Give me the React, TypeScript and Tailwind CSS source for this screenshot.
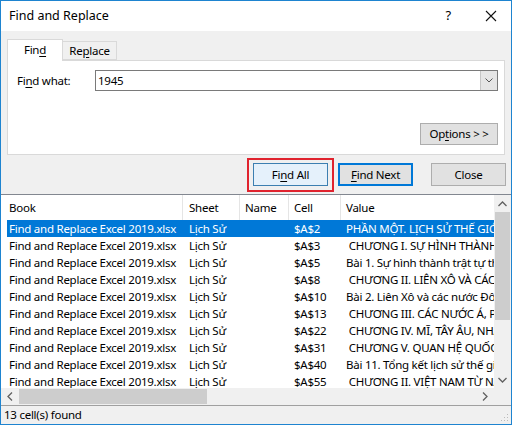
import React from "react";

const rows = [
  { cell: "$A$2", value: "PHẦN MỘT. LỊCH SỬ THẾ GIỚI HIỆN ĐẠI" },
  { cell: "$A$3", value: " CHƯƠNG I. SỰ HÌNH THÀNH TRẬT TỰ THẾ GIỚI" },
  { cell: "$A$5", value: "Bài 1. Sự hình thành trật tự thế giới mới" },
  { cell: "$A$8", value: " CHƯƠNG II. LIÊN XÔ VÀ CÁC NƯỚC ĐÔNG ÂU" },
  { cell: "$A$10", value: "Bài 2. Liên Xô và các nước Đông Âu" },
  { cell: "$A$13", value: " CHƯƠNG III. CÁC NƯỚC Á, PHI, MĨ LA TINH" },
  { cell: "$A$22", value: " CHƯƠNG IV. MĨ, TÂY ÂU, NHẬT BẢN" },
  { cell: "$A$31", value: " CHƯƠNG V. QUAN HỆ QUỐC TẾ" },
  { cell: "$A$40", value: "Bài 11. Tổng kết lịch sử thế giới" },
  { cell: "$A$55", value: " CHƯƠNG II. VIỆT NAM TỪ NĂM 1945" },
];

const font = { fontFamily: '"Noto Sans", "Open Sans", sans-serif' };

function U({ children }: { children: React.ReactNode }) {
  return <span className="underline underline-offset-2">{children}</span>;
}

export default function App() {
  return (
    <div
      className="w-[512px] h-[425px] border border-[#1e84d0] bg-[#f0f0f0] flex flex-col text-[11.5px] tracking-[-0.25px] text-black overflow-hidden"
      style={font}
    >
      {/* Title bar */}
      <div className="h-[30px] bg-white flex items-center shrink-0">
        <span className="pl-[8px] text-[12.5px] tracking-normal">Find and Replace</span>
        <span className="ml-auto mr-[34px] text-[13px]">?</span>
        <svg width="12" height="12" viewBox="0 0 12 12" className="mr-[14px]">
          <path d="M1 1L11 11M11 1L1 11" stroke="#111" strokeWidth="1.1" />
        </svg>
      </div>

      {/* Tabs */}
      <div className="flex items-end pl-[6px] pt-[7px] h-[29px] shrink-0">
        <div className="w-[56px] h-[22px] pb-[2px] bg-white border border-b-0 border-[#d9d9d9] flex items-center justify-center relative z-10 -mb-px">
          <span>
            Fin<U>d</U>
          </span>
        </div>
        <div className="w-[54px] h-[19px] border border-l-0 border-[#d9d9d9] flex items-center justify-center">
          <span>
            Re<U>p</U>lace
          </span>
        </div>
      </div>

      {/* Tab panel */}
      <div className="mx-[6px] h-[95px] bg-white border border-[#d9d9d9] flex flex-col shrink-0 pr-[6px]">
        <div className="flex items-center mt-[9px]">
          <span className="w-[87px] pl-[9px]">
            Fi<U>n</U>d what:
          </span>
          <div className="flex-1 h-[21px] border border-[#7a7a7a] flex items-center">
            <span className="pl-[2px] flex-1">1945</span>
            <div className="w-[17px] h-[19px] bg-[#e5e5e5] border-l border-[#c5c5c5] flex items-center justify-center">
              <svg width="8" height="5" viewBox="0 0 8 5">
                <path d="M0.5 0.5L4 4L7.5 0.5" stroke="#555" fill="none" />
              </svg>
            </div>
          </div>
        </div>
        <div className="flex justify-end mt-[32px]">
          <div className="w-[78px] h-[22px] bg-[#e1e1e1] border border-[#adadad] flex items-center justify-center">
            <span>
              Op<U>t</U>ions &gt; &gt;
            </span>
          </div>
        </div>
      </div>

      {/* Buttons */}
      <div className="flex items-center h-[39px] shrink-0 pl-[246px]">
        <div className="w-[87px] h-[34px] border-2 border-[#e0232e] flex items-center justify-center">
          <div className="w-[75px] h-[23px] bg-[#e5f1fb] border border-[#3c7fb1] flex items-center justify-center">
            <span>
              Fi<U>n</U>d All
            </span>
          </div>
        </div>
        <div className="ml-[4px] w-[75px] h-[23px] bg-[#e1e1e1] border-2 border-[#0078d7] flex items-center justify-center">
          <span>
            <U>F</U>ind Next
          </span>
        </div>
        <div className="ml-[18px] w-[75px] h-[23px] bg-[#e1e1e1] border border-[#adadad] flex items-center justify-center">
          <span>Close</span>
        </div>
      </div>

      {/* Results list */}
      <div className="h-[211px] bg-white border-t border-[#828790] flex shrink-0 flex-col">
        <div className="flex flex-1 min-h-0">
          <div className="flex-1 min-w-0 flex flex-col overflow-hidden">
            <div className="h-[25px] grid grid-cols-[182px_57px_49px_52px_1fr] shrink-0">
              <div className="pl-[8px] flex items-center border-r border-[#e5e5e5]">Book</div>
              <div className="pl-[6px] flex items-center border-r border-[#e5e5e5]">Sheet</div>
              <div className="pl-[5px] flex items-center border-r border-[#e5e5e5]">Name</div>
              <div className="pl-[5px] flex items-center border-r border-[#e5e5e5]">Cell</div>
              <div className="pl-[5px] flex items-center">Value</div>
            </div>
            {rows.map((r, i) => (
              <div
                key={r.cell}
                className={
                  i === 0
                    ? "h-[17px] grid grid-cols-[176px_57px_49px_52px_1fr] ml-[6px] bg-[#0078d7] text-white shrink-0"
                    : "h-[17px] grid grid-cols-[176px_57px_49px_52px_1fr] ml-[6px] shrink-0"
                }
              >
                <div className="pl-[2px] flex items-center whitespace-nowrap">
                  Find and Replace Excel 2019.xlsx
                </div>
                <div className="pl-[6px] flex items-center whitespace-nowrap">Lịch Sử</div>
                <div />
                <div className="pl-[5px] flex items-center">{r.cell}</div>
                <div className="pl-[5px] flex items-center whitespace-pre overflow-hidden">{r.value}</div>
              </div>
            ))}
          </div>
          {/* Vertical scrollbar */}
          <div className="w-[17px] bg-[#f0f0f0] flex flex-col items-center shrink-0">
            <div className="h-[17px] flex items-center justify-center">
              <svg width="9" height="6" viewBox="0 0 9 6">
                <path d="M0.5 5L4.5 1L8.5 5" stroke="#606060" strokeWidth="1.3" fill="none" />
              </svg>
            </div>
            <div className="w-[15px] h-[108px] bg-[#cdcdcd]" />
            <div className="flex-1" />
            <div className="h-[17px] flex items-center justify-center">
              <svg width="9" height="6" viewBox="0 0 9 6">
                <path d="M0.5 1L4.5 5L8.5 1" stroke="#606060" strokeWidth="1.3" fill="none" />
              </svg>
            </div>
          </div>
        </div>
        {/* Horizontal scrollbar */}
        <div className="h-[17px] flex shrink-0">
          <div className="flex-1 bg-[#f0f0f0] flex items-center">
            <div className="w-[18px] flex items-center justify-center">
              <svg width="6" height="9" viewBox="0 0 6 9">
                <path d="M5 0.5L1 4.5L5 8.5" stroke="#606060" strokeWidth="1.3" fill="none" />
              </svg>
            </div>
            <div className="w-[188px] h-[15px] bg-[#cdcdcd]" />
            <div className="flex-1" />
            <div className="w-[18px] flex items-center justify-center">
              <svg width="6" height="9" viewBox="0 0 6 9">
                <path d="M1 0.5L5 4.5L1 8.5" stroke="#606060" strokeWidth="1.3" fill="none" />
              </svg>
            </div>
          </div>
          <div className="w-[17px] bg-[#f0f0f0]" />
        </div>
      </div>

      {/* Status bar */}
      <div className="flex-1 border-t border-[#a0a0a0] bg-[#f0f0f0] flex items-center relative">
        <span className="pl-[3px]">13 cell(s) found</span>
        <svg width="10" height="10" viewBox="0 0 10 10" className="absolute right-[2px] bottom-[2px]">
          <rect x="8" y="2" width="1" height="1" fill="#bbb" />
          <rect x="5" y="5" width="1" height="1" fill="#bbb" />
          <rect x="8" y="5" width="1" height="1" fill="#bbb" />
          <rect x="2" y="8" width="1" height="1" fill="#bbb" />
          <rect x="5" y="8" width="1" height="1" fill="#bbb" />
          <rect x="8" y="8" width="1" height="1" fill="#bbb" />
        </svg>
      </div>
    </div>
  );
}
